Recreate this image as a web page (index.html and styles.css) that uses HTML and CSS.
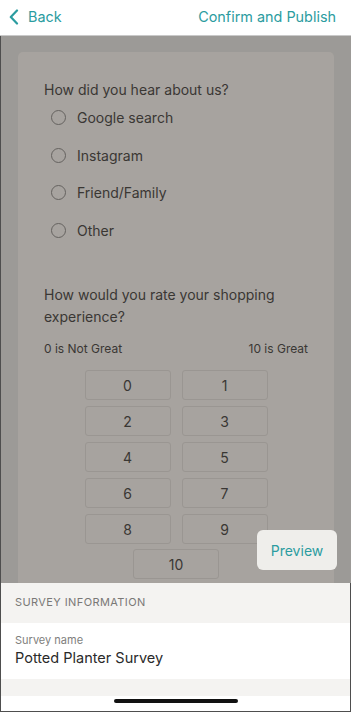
FILE: index.html
```html
<!DOCTYPE html>
<html>
<head>
<meta charset="utf-8">
<link rel="stylesheet" href="styles.css">
</head>
<body>
<div class="screen">
  <header class="topbar">
    <a class="back">
      <svg class="chev" width="10" height="16" viewBox="0 0 10 16"><path d="M8 1.5 L1.8 8 L8 14.5" fill="none" stroke="#2b9ca0" stroke-width="2.2" stroke-linecap="round" stroke-linejoin="round"/></svg>
      <span>Back</span>
    </a>
    <a class="publish">Confirm and Publish</a>
  </header>
  <main class="stage">
    <section class="card">
      <p class="question">How did you hear about us?</p>
      <ul class="options">
        <li><span class="radio"></span>Google search</li>
        <li><span class="radio"></span>Instagram</li>
        <li><span class="radio"></span>Friend/Family</li>
        <li><span class="radio"></span>Other</li>
      </ul>
      <p class="question q2">How would you rate your shopping experience?</p>
      <div class="scale">
        <span>0 is Not Great</span>
        <span>10 is Great</span>
      </div>
      <div class="grid">
        <div class="num">0</div><div class="num">1</div>
        <div class="num">2</div><div class="num">3</div>
        <div class="num">4</div><div class="num">5</div>
        <div class="num">6</div><div class="num">7</div>
        <div class="num">8</div><div class="num">9</div>
        <div class="num ten">10</div>
      </div>
    </section>
  </main>
  <button class="preview">Preview</button>
  <section class="info">
    <div class="info-head">SURVEY INFORMATION</div>
    <div class="field">
      <div class="label">Survey name</div>
      <div class="value">Potted Planter Survey</div>
    </div>
    <div class="band"></div>
    <div class="home"><span class="bar"></span></div>
  </section>
</div>
</body>
</html>
```

FILE: styles.css
```css
* { box-sizing: border-box; }
html, body { margin: 0; padding: 0; }
body {
  width: 351px;
  height: 712px;
  overflow: hidden;
  font-family: Inter, "Open Sans", sans-serif;
  background: #ffffff;
}
.screen {
  position: relative;
  width: 351px;
  height: 712px;
  display: flex;
  flex-direction: column;
}
.topbar {
  height: 36px;
  flex: none;
  display: flex;
  align-items: center;
  justify-content: space-between;
  padding: 0 15px 2px 9px;
  background: #fff;
  border-bottom: 1px solid #c9c9c9;
}
.topbar a {
  color: #2b9ca0;
  font-size: 14.4px;
  text-decoration: none;
}
.back {
  display: flex;
  align-items: center;
  gap: 9px;
}
.chev {
  width: 10px;
  height: 16px;
}
.stage {
  height: 547px;
  flex: none;
  overflow: hidden;
  background: #9c9a97;
  padding: 16px 17px 0 17px;
  border-left: 1px solid #4e4e4e;
}
.card {
  background: #a7a39f;
  border-radius: 5px;
  padding: 28px 26px 40px 26px;
  color: #3a3734;
}
.question {
  margin: 0;
  font-size: 14px;
  line-height: 20px;
}
.options {
  list-style: none;
  margin: -1px 0 0 0;
  padding: 0;
}
.options li {
  height: 37.5px;
  display: flex;
  align-items: center;
  font-size: 14px;
  padding-left: 7px;
}
.radio {
  width: 15px;
  height: 15px;
  border: 1.4px solid #65625f;
  border-radius: 50%;
  margin-right: 11px;
  flex: none;
}
.q2 {
  margin-top: 35px;
  line-height: 22px;
}
.scale {
  display: flex;
  justify-content: space-between;
  font-size: 12px;
  line-height: 16px;
  margin-top: 13px;
}
.grid {
  margin: 13px auto 0;
  width: 183px;
  display: grid;
  grid-template-columns: 86px 86px;
  column-gap: 11px;
  row-gap: 6px;
}
.num {
  height: 30px;
  border: 1px solid #9a9692;
  border-radius: 3px;
  display: flex;
  align-items: center;
  justify-content: center;
  font-size: 14px;
}
.ten {
  grid-column: 1 / 3;
  width: 86px;
  justify-self: center;
  margin-top: -1px;
}
.preview {
  position: absolute;
  left: 257px;
  top: 530px;
  width: 80px;
  height: 40px;
  border: none;
  border-radius: 6px;
  background: #efeeeb;
  color: #2b9ca0;
  font-family: Inter, "Open Sans", sans-serif;
  font-size: 14px;
  padding: 0;
}
.info {
  flex: 1;
  display: flex;
  flex-direction: column;
  border-left: 1px solid #4e4e4e;
  border-bottom: 1px solid #4e4e4e;
  border-right: 1px solid #4e4e4e;
}
.info-head {
  height: 40px;
  background: #f4f3f1;
  display: flex;
  align-items: center;
  padding: 0 14px 2px;
  font-size: 11px;
  letter-spacing: 0.4px;
  color: #7a7876;
}
.field {
  height: 56px;
  background: #fff;
  padding: 10px 14px 0;
}
.label {
  font-size: 11px;
  color: #807e7c;
  line-height: 14px;
}
.value {
  font-size: 14.5px;
  color: #2a2a2a;
  line-height: 20px;
  margin-top: 1px;
}
.band {
  height: 17px;
  background: #f4f3f1;
}
.home {
  flex: 1;
  background: #fff;
  display: flex;
  justify-content: center;
  padding-top: 3px;
}
.bar {
  width: 124px;
  height: 4px;
  border-radius: 2px;
  background: #111;
}
```
